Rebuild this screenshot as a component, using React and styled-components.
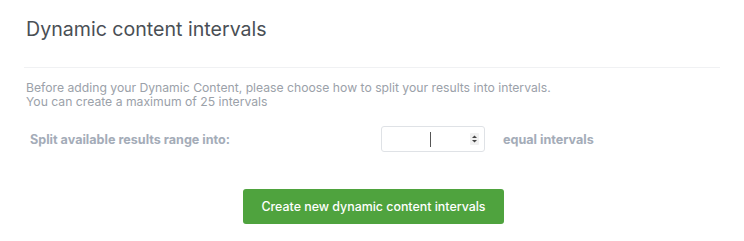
import React from 'react'
import styled, { createGlobalStyle } from 'styled-components'

const GlobalStyle = createGlobalStyle`
  html, body {
    margin: 0;
    padding: 0;
    background: #ffffff;
  }
  body {
    font-family: Inter, "Open Sans", sans-serif;
  }
`;

const Panel = styled.div`
  width: 744px;
  height: 241px;
  box-sizing: border-box;
  padding: 16px 24px 0 24px;
`;

const Title = styled.h2`
  margin: 0 0 0 2px;
  font-size: 19.6px;
  font-weight: 400;
  line-height: 26px;
  color: #4a4f55;
`;

const Divider = styled.hr`
  margin: 25px 0 0 0;
  width: 696px;
  border: 0;
  border-top: 1px solid #f0f1f3;
`;

const Intro = styled.p`
  margin: 13px 0 0 2px;
  font-size: 12.2px;
  line-height: 14px;
  color: #9ba1a9;
`;

const Row = styled.div`
  display: flex;
  align-items: center;
  margin-top: 17px;
`;

const Label = styled.label`
  width: 351px;
  padding-left: 6px;
  font-size: 12.6px;
  font-weight: 700;
  color: #a4acb8;
`;

const NumberBox = styled.div`
  position: relative;
  width: 102px;
  height: 24px;
  border: 1px solid #dfe2e6;
  border-radius: 3px;
  background: #fff;
`;

const Caret = styled.span`
  position: absolute;
  left: 48px;
  top: 5px;
  width: 1px;
  height: 15px;
  background: #555;
`;

const Spinner = styled.svg`
  position: absolute;
  right: 5px;
  top: 6px;
`;

const Suffix = styled.span`
  margin-left: 18px;
  font-size: 12.6px;
  font-weight: 700;
  color: #a4acb8;
`;

const Actions = styled.div`
  display: flex;
  margin-top: 37px;
  padding-left: 219px;
`;

const CreateButton = styled.button`
  width: 261px;
  height: 35px;
  border: 0;
  border-radius: 3px;
  background: #4fa33e;
  color: #ffffff;
  font-family: inherit;
  font-size: 12.4px;
  font-weight: 500;
  cursor: pointer;
`;

const App = () => (
  <>
    <GlobalStyle />
    <Panel>
      <Title>Dynamic content intervals</Title>
      <Divider />
      <Intro>
        Before adding your Dynamic Content, please choose how to split your results into intervals.
        <br />
        You can create a maximum of 25 intervals
      </Intro>
      <Row>
        <Label>Split available results range into:</Label>
        <NumberBox>
          <Caret />
          <Spinner width="9" height="12" viewBox="0 0 9 12">
            <rect width="9" height="12" rx="1" fill="#f1f1f1" />
            <path d="M2 5 L4.5 2.5 L7 5 Z" fill="#444" />
            <path d="M2 7 L4.5 9.5 L7 7 Z" fill="#444" />
          </Spinner>
        </NumberBox>
        <Suffix>equal intervals</Suffix>
      </Row>
      <Actions>
        <CreateButton>Create new dynamic content intervals</CreateButton>
      </Actions>
    </Panel>
  </>
)

export default App
